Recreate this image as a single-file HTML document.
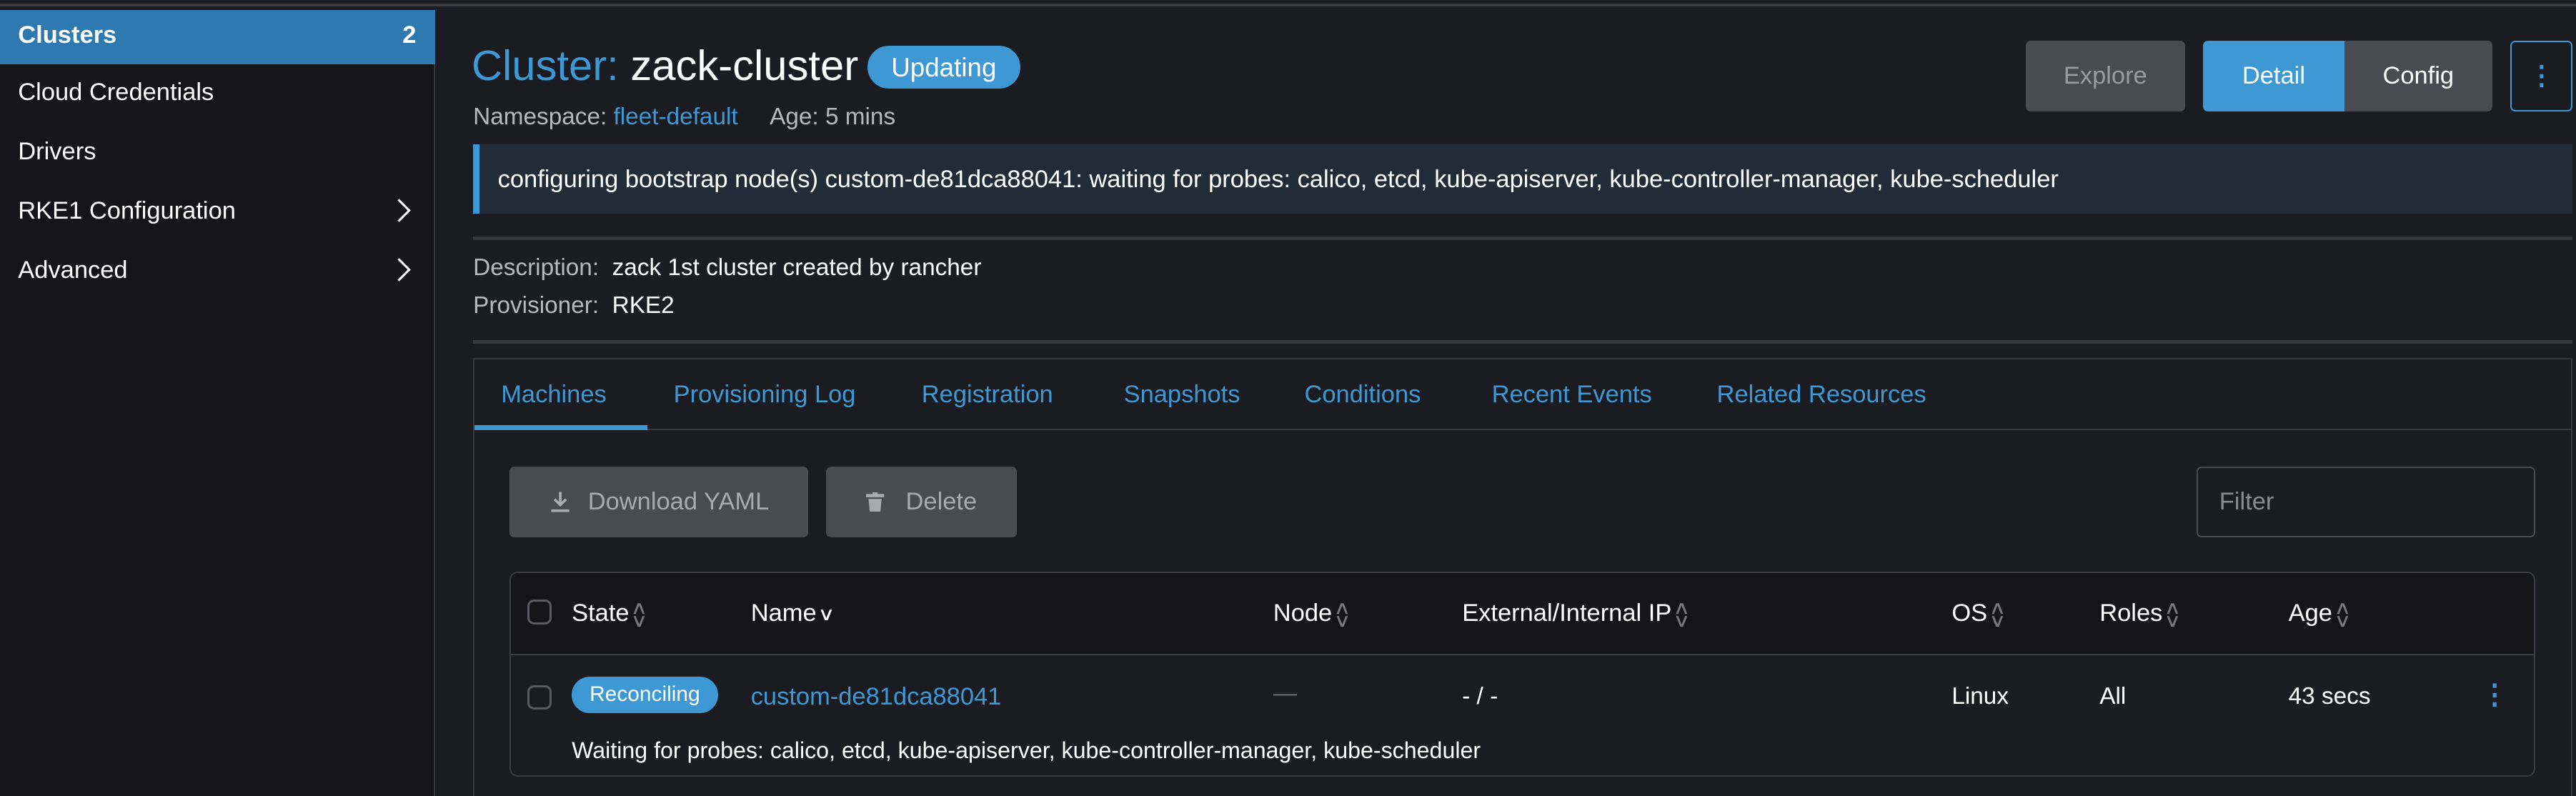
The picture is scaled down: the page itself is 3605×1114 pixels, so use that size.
<!DOCTYPE html>
<html><head><meta charset="utf-8"><style>
*{box-sizing:border-box;margin:0;padding:0}
html,body{width:3605px;height:1114px;overflow:hidden;background:#1b1c21}
#w{zoom:2.2991;width:1568px;height:485px;position:relative;font-family:"Liberation Sans",sans-serif;color:#fff;font-size:14.5px;background:#1b1c21}
.a{position:absolute;white-space:nowrap}
.top{left:0;top:0;width:1568px;height:4px;background:#1b1c21;border-bottom:2px solid #3c3d44}
.side{left:0;top:6px;width:265px;height:479px;background:#141419;border-right:1px solid #35363c}
.act{left:0;top:6px;width:265px;height:33px;background:#2e7ab0}
.si{left:11px;font-size:15px}
.chev{left:238px;width:10px;height:10px;border-right:1.5px solid #fff;border-top:1.5px solid #fff;transform:rotate(45deg)}
.blue{color:#3d98d3}
.gray{color:#b6b8c0}
.btn{height:43px;border-radius:3px;background:#4a4b52;display:flex;align-items:center;justify-content:center;font-size:15px;color:#c8c9ce}
.hr{left:288px;width:1278px;height:2px;background:#38393f}
.th{top:365px;font-size:15px}
.sort{color:#777;font-size:11px;display:inline-block;line-height:8px;vertical-align:middle;margin-left:2px;transform:scaleX(1.3)}
.cb{width:15px;height:15px;border:1.5px solid #5a5b62;border-radius:4px}
.tab{top:232px;font-size:15px;color:#3d98d3}
</style></head><body><div id="w">
<div class="a top"></div>
<div class="a side"></div>
<div class="a act"></div>
<div class="a si" style="top:13px;font-weight:bold">Clusters</div>
<div class="a" style="left:245px;top:13px;font-size:15px;font-weight:bold">2</div>
<div class="a si" style="top:48px">Cloud Credentials</div>
<div class="a si" style="top:84px">Drivers</div>
<div class="a si" style="top:120px">RKE1 Configuration</div>
<div class="a chev" style="top:123px"></div>
<div class="a si" style="top:156px">Advanced</div>
<div class="a chev" style="top:159px"></div>

<div class="a" style="left:287px;top:25px;font-size:26px"><span class="blue">Cluster:</span> zack-cluster</div>
<div class="a" style="left:528px;top:28px;width:93px;height:26px;border-radius:13px;background:#3d98d3;font-size:16px;text-align:center;line-height:27px">Updating</div>
<div class="a gray" style="left:288px;top:63px;font-size:14.5px">Namespace: <span class="blue">fleet-default</span> &nbsp; &nbsp; Age: 5 mins</div>

<div class="a btn" style="left:1233px;top:25px;width:97px;color:#9a9ba1">Explore</div>
<div class="a btn" style="left:1341px;top:25px;width:86px;background:#3d98d3;color:#fff;border-radius:3px 0 0 3px">Detail</div>
<div class="a btn" style="left:1427px;top:25px;width:90px;color:#fff;border-radius:0 3px 3px 0">Config</div>
<div class="a" style="left:1528px;top:25px;width:38px;height:43px;border:1px solid #3d98d3;border-radius:3px;color:#3d98d3;text-align:center;line-height:41px;font-size:16px;font-weight:bold">&#x22EE;</div>

<div class="a" style="left:288px;top:88px;width:1278px;height:42px;background:#212c38;border-left:4px solid #3d98d3"></div>
<div class="a" style="left:303px;top:101px;font-size:15px">configuring bootstrap node(s) custom-de81dca88041: waiting for probes: calico, etcd, kube-apiserver, kube-controller-manager, kube-scheduler</div>
<div class="a hr" style="top:144px"></div>
<div class="a" style="left:288px;top:155px"><span class="gray">Description:</span>&nbsp; zack 1st cluster created by rancher</div>
<div class="a" style="left:288px;top:178px"><span class="gray">Provisioner:</span>&nbsp; RKE2</div>
<div class="a hr" style="top:207px"></div>

<div class="a" style="left:288px;top:218px;width:1278px;height:280px;border:1px solid #38393f"></div>
<div class="a" style="left:288px;top:261px;width:1278px;height:1px;background:#38393f"></div>
<div class="a" style="left:289px;top:259px;width:105px;height:3px;background:#3d98d3"></div>
<div class="a tab" style="left:305px">Machines</div>
<div class="a tab" style="left:410px">Provisioning Log</div>
<div class="a tab" style="left:561px">Registration</div>
<div class="a tab" style="left:684px">Snapshots</div>
<div class="a tab" style="left:794px">Conditions</div>
<div class="a tab" style="left:908px">Recent Events</div>
<div class="a tab" style="left:1045px">Related Resources</div>

<div class="a btn" style="left:310px;top:284px;width:182px;color:#a9aab0"><svg width="14" height="14" viewBox="0 0 14 14" style="margin-right:10px"><path d="M7 1v8M3.5 5.5L7 9l3.5-3.5M1.5 12.5h11" stroke="#a9aab0" stroke-width="1.6" fill="none"/></svg>Download YAML</div>
<div class="a btn" style="left:503px;top:284px;width:116px;color:#a9aab0"><svg width="11" height="12" viewBox="0 0 11 12" style="margin-right:13px"><rect x="0" y="1" width="11" height="2" fill="#a9aab0"/><rect x="4" y="0" width="3" height="2" fill="#a9aab0"/><path d="M1.5 4h8l-.8 8h-6.4z" fill="#a9aab0"/></svg>Delete</div>
<div class="a" style="left:1337px;top:284px;width:206px;height:43px;border:1px solid #4a4b52;border-radius:3px;color:#8a8b91;font-size:15px;line-height:41px;padding-left:13px">Filter</div>

<div class="a" style="left:310px;top:348px;width:1233px;height:125px;border:1px solid #3c3d44;border-radius:5px;overflow:hidden">
<div style="height:50px;background:#141419;border-bottom:1px solid #3c3d44"></div></div>
<div class="a cb" style="left:321px;top:365px"></div>
<div class="a th" style="left:348px">State<span class="sort">&#x2227;<br>&#x2228;</span></div>
<div class="a th" style="left:457px">Name<span class="sort" style="color:#fff">&#x2228;</span></div>
<div class="a th" style="left:775px">Node<span class="sort">&#x2227;<br>&#x2228;</span></div>
<div class="a th" style="left:890px">External/Internal IP<span class="sort">&#x2227;<br>&#x2228;</span></div>
<div class="a th" style="left:1188px">OS<span class="sort">&#x2227;<br>&#x2228;</span></div>
<div class="a th" style="left:1278px">Roles<span class="sort">&#x2227;<br>&#x2228;</span></div>
<div class="a th" style="left:1393px">Age<span class="sort">&#x2227;<br>&#x2228;</span></div>

<div class="a cb" style="left:321px;top:417px"></div>
<div class="a" style="left:348px;top:412px;width:89px;height:22px;border-radius:11px;background:#3d98d3;font-size:13px;text-align:center;line-height:22px">Reconciling</div>
<div class="a blue" style="left:457px;top:416px;font-size:15px">custom-de81dca88041</div>
<div class="a" style="left:775px;top:414px;color:#666">—</div>
<div class="a" style="left:890px;top:416px">- / -</div>
<div class="a" style="left:1188px;top:416px">Linux</div>
<div class="a" style="left:1278px;top:416px">All</div>
<div class="a" style="left:1393px;top:416px">43 secs</div>
<div class="a blue" style="left:1510px;top:413px;font-size:17px;font-weight:bold">&#x22EE;</div>
<div class="a" style="left:348px;top:449px;font-size:14px">Waiting for probes: calico, etcd, kube-apiserver, kube-controller-manager, kube-scheduler</div>
</div></body></html>
